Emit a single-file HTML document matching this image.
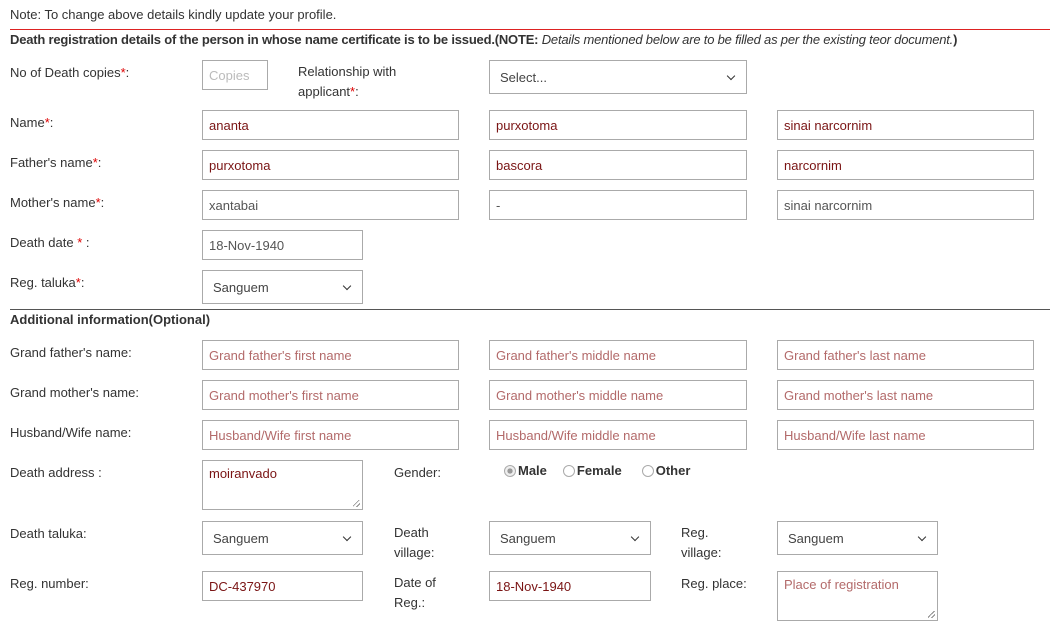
<!DOCTYPE html>
<html><head><meta charset="utf-8"><style>
body{margin:0;width:1050px;height:630px;background:#fff;font-family:"Liberation Sans",sans-serif;font-size:13px;color:#333;position:relative;overflow:hidden}
.a{position:absolute;white-space:nowrap}
.l{position:absolute;line-height:20px;font-size:13px;color:#333;top:0;margin-top:1px}
.i{position:absolute;box-sizing:border-box;border:1px solid #aaa;background:#fff;height:30px;padding:0 0 0 6px;line-height:30px;font-size:13px;color:#7a1414;white-space:nowrap;overflow:hidden}
.ph{color:#b36a6a}
.g{color:#555}
.s{position:absolute;box-sizing:border-box;border:1px solid #aaa;background:#fff;height:34px;padding-left:10px;line-height:33px;color:#444}
.s:after{content:"";position:absolute;right:12px;top:12px;width:5px;height:5px;border-right:1.3px solid #333;border-bottom:1.3px solid #333;transform:rotate(45deg)}
.r{color:#d00}
.ta{position:absolute;box-sizing:border-box;border:1px solid #aaa;height:50px;padding:4px 6px;line-height:18px;color:#7a1414}
.ta:after{content:"";position:absolute;right:2px;bottom:2px;width:7px;height:7px;background:linear-gradient(135deg,transparent 40%,#888 40%,#888 50%,transparent 50%,transparent 70%,#888 70%,#888 80%,transparent 80%)}
.rad{display:inline-block;width:12px;height:12px;border:1px solid #aaa;border-radius:50%;vertical-align:-2px;box-sizing:border-box;margin-right:2px;position:relative}
</style></head><body>
<div class="a" style="left:10px;top:6px;line-height:18px">Note: To change above details kindly update your profile.</div>
<div class="a" style="left:10px;top:29px;width:1040px;height:1px;background:#d22"></div>
<div class="a" style="left:10px;top:31px;line-height:18px;font-size:13px;font-weight:bold;letter-spacing:-0.2px">Death registration details of the person in whose name certificate is to be issued.(NOTE: <i style="font-weight:normal">Details mentioned below are to be filled as per the existing teor document.</i>)</div>

<div class="l" style="top:62px;left:10px">No of Death copies<span class="r">*</span>:</div>
<div class="i" style="left:202px;top:60px;width:66px;color:#bbb">Copies</div>
<div class="l" style="left:298px;top:61px">Relationship with<br>applicant<span class="r">*</span>:</div>
<div class="s" style="left:489px;top:60px;width:258px">Select...</div>

<div class="l" style="left:10px;top:112px">Name<span class="r">*</span>:</div>
<div class="i" style="left:202px;top:110px;width:257px">ananta</div>
<div class="i" style="left:489px;top:110px;width:258px">purxotoma</div>
<div class="i" style="left:777px;top:110px;width:257px">sinai narcornim</div>

<div class="l" style="left:10px;top:152px">Father's name<span class="r">*</span>:</div>
<div class="i" style="left:202px;top:150px;width:257px">purxotoma</div>
<div class="i" style="left:489px;top:150px;width:258px">bascora</div>
<div class="i" style="left:777px;top:150px;width:257px">narcornim</div>

<div class="l" style="left:10px;top:192px">Mother's name<span class="r">*</span>:</div>
<div class="i g" style="left:202px;top:190px;width:257px">xantabai</div>
<div class="i g" style="left:489px;top:190px;width:258px">-</div>
<div class="i g" style="left:777px;top:190px;width:257px">sinai narcornim</div>

<div class="l" style="left:10px;top:232px">Death date <span class="r">*</span> :</div>
<div class="i g" style="left:202px;top:230px;width:161px">18-Nov-1940</div>

<div class="l" style="left:10px;top:272px">Reg. taluka<span class="r">*</span>:</div>
<div class="s" style="left:202px;top:270px;width:161px">Sanguem</div>

<div class="a" style="left:10px;top:309px;width:1040px;height:1px;background:#555"></div>
<div class="a" style="left:10px;top:311px;line-height:18px;font-weight:bold">Additional information(Optional)</div>

<div class="l" style="left:10px;top:342px">Grand father's name:</div>
<div class="i ph" style="left:202px;top:340px;width:257px">Grand father's first name</div>
<div class="i ph" style="left:489px;top:340px;width:258px">Grand father's middle name</div>
<div class="i ph" style="left:777px;top:340px;width:257px">Grand father's last name</div>

<div class="l" style="left:10px;top:382px">Grand mother's name:</div>
<div class="i ph" style="left:202px;top:380px;width:257px">Grand mother's first name</div>
<div class="i ph" style="left:489px;top:380px;width:258px">Grand mother's middle name</div>
<div class="i ph" style="left:777px;top:380px;width:257px">Grand mother's last name</div>

<div class="l" style="left:10px;top:422px">Husband/Wife name:</div>
<div class="i ph" style="left:202px;top:420px;width:257px">Husband/Wife first name</div>
<div class="i ph" style="left:489px;top:420px;width:258px">Husband/Wife middle name</div>
<div class="i ph" style="left:777px;top:420px;width:257px">Husband/Wife last name</div>

<div class="l" style="left:10px;top:462px">Death address :</div>
<div class="ta" style="left:202px;top:460px;width:161px">moiranvado</div>
<div class="l" style="left:394px;top:462px">Gender:</div>
<div class="a" style="left:504px;top:462px;line-height:18px;font-weight:bold;color:#333"><span class="rad" style="background:radial-gradient(circle,#999 35%,#eee 40%)"></span>Male<span style="display:inline-block;width:16px"></span><span class="rad"></span>Female<span style="display:inline-block;width:20px"></span><span class="rad"></span>Other</div>

<div class="l" style="left:10px;top:523px">Death taluka:</div>
<div class="s" style="left:202px;top:521px;width:161px">Sanguem</div>
<div class="l" style="left:394px;top:522px">Death<br>village:</div>
<div class="s" style="left:489px;top:521px;width:162px">Sanguem</div>
<div class="l" style="left:681px;top:522px">Reg.<br>village:</div>
<div class="s" style="left:777px;top:521px;width:161px">Sanguem</div>

<div class="l" style="left:10px;top:573px">Reg. number:</div>
<div class="i" style="left:202px;top:571px;width:161px">DC-437970</div>
<div class="l" style="left:394px;top:572px">Date of<br>Reg.:</div>
<div class="i" style="left:489px;top:571px;width:162px">18-Nov-1940</div>
<div class="l" style="left:681px;top:573px">Reg. place:</div>
<div class="ta ph" style="left:777px;top:571px;width:161px;color:#b36a6a">Place of registration</div>
</body></html>
